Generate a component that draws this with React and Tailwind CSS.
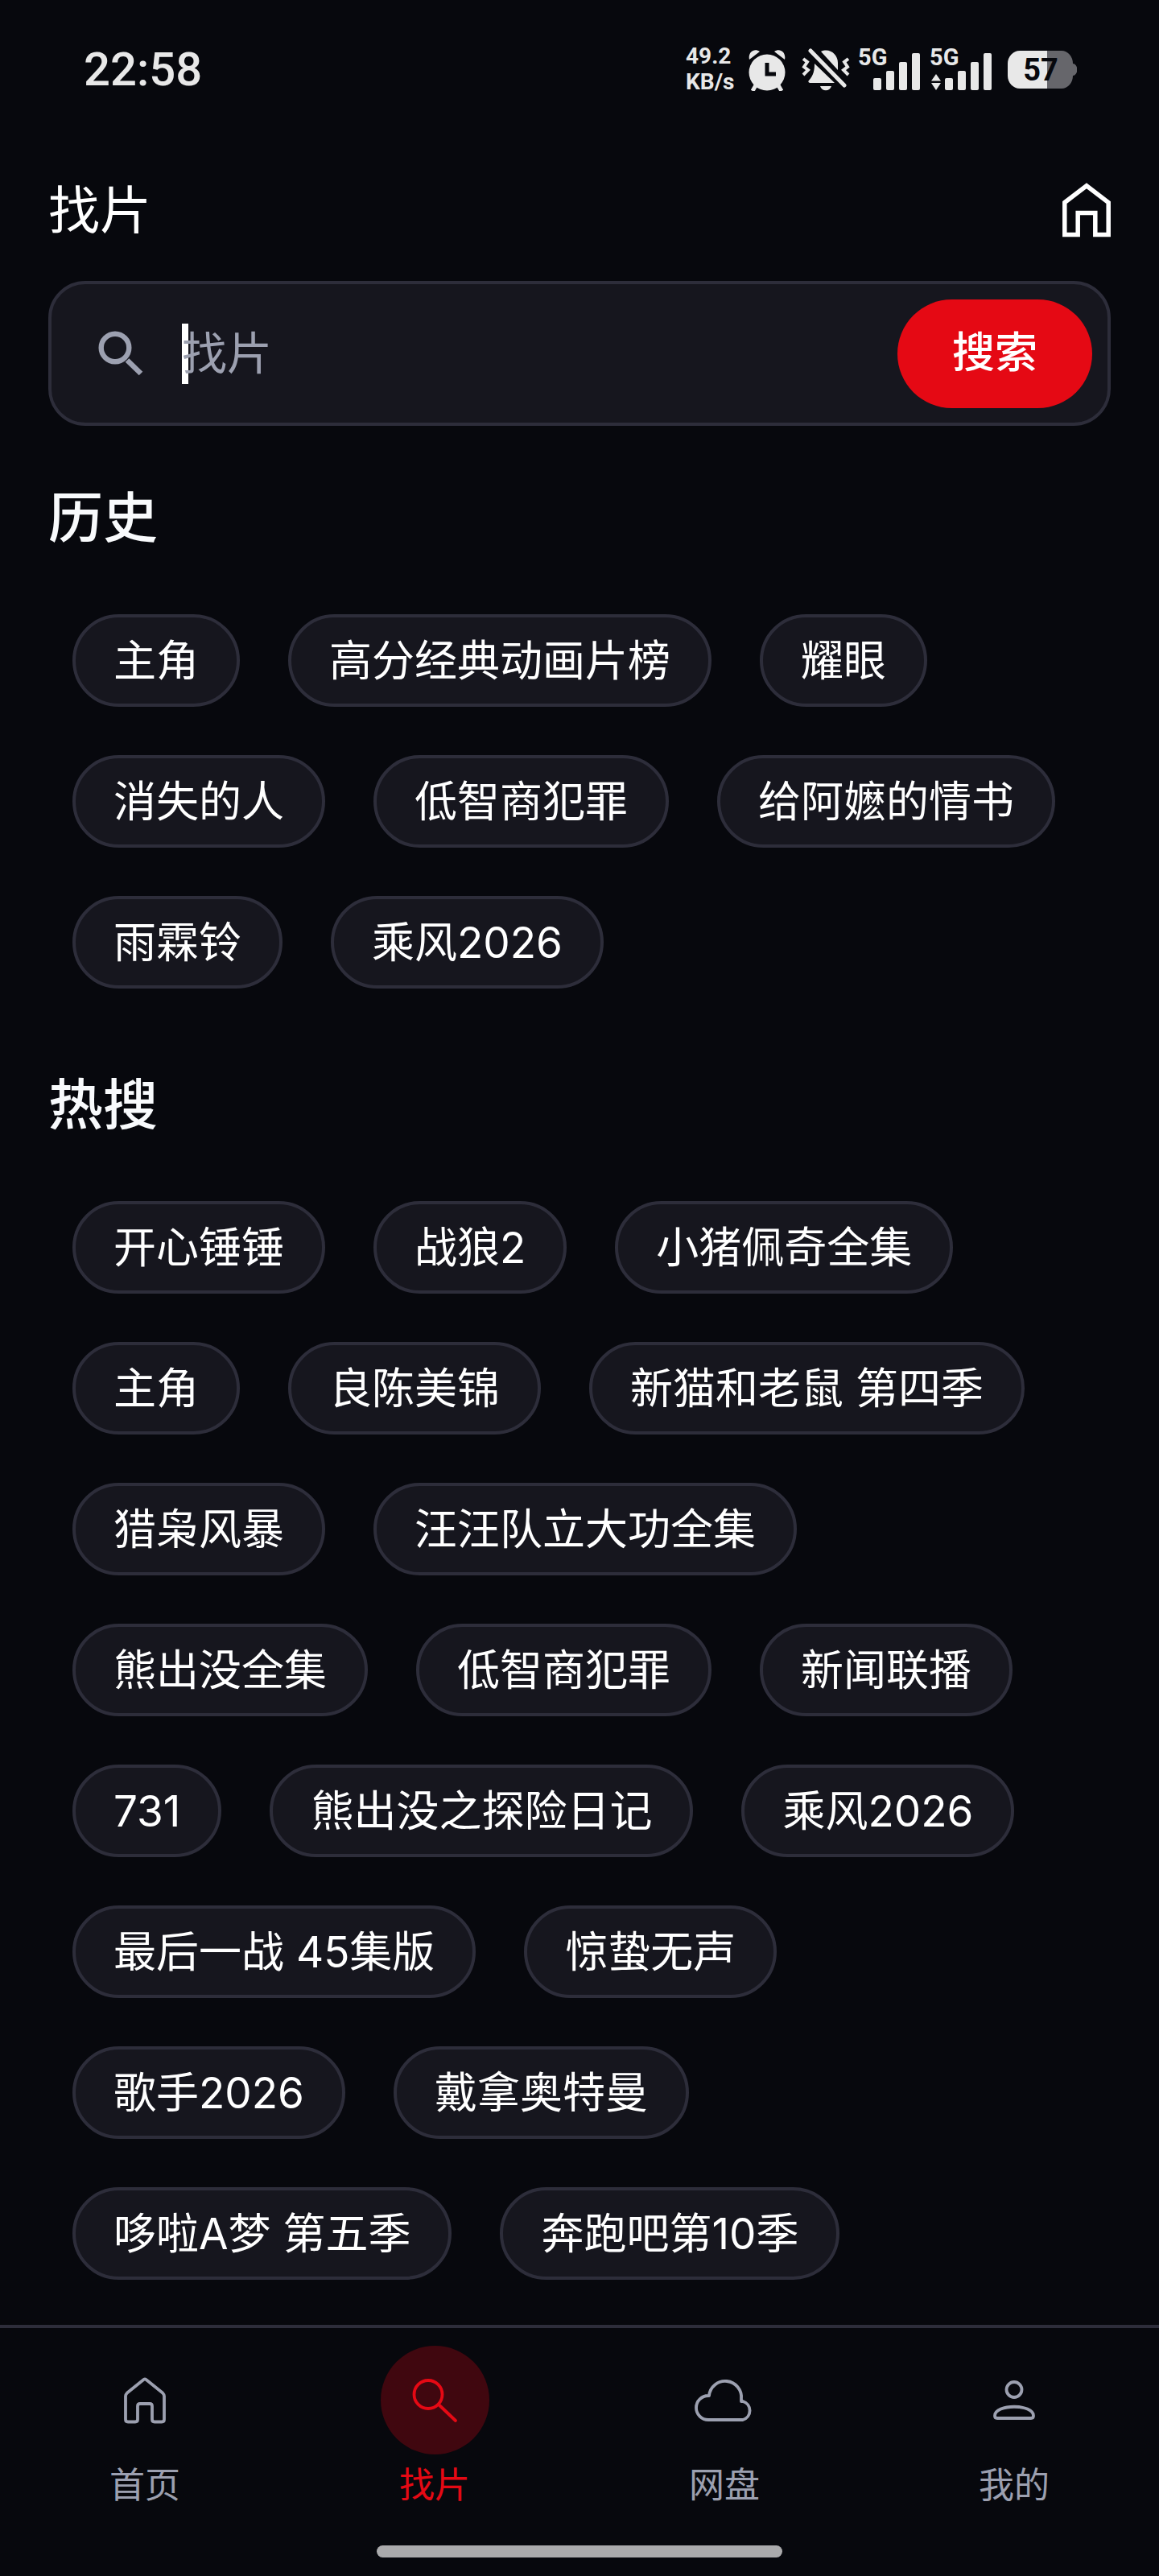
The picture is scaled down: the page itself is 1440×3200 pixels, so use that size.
const historyItems = [
  "主角",
  "高分经典动画片榜",
  "耀眼",
  "消失的人",
  "低智商犯罪",
  "给阿嬷的情书",
  "雨霖铃",
  "乘风2026",
];

const hotItems = [
  "开心锤锤",
  "战狼2",
  "小猪佩奇全集",
  "主角",
  "良陈美锦",
  "新猫和老鼠 第四季",
  "猎枭风暴",
  "汪汪队立大功全集",
  "熊出没全集",
  "低智商犯罪",
  "新闻联播",
  "731",
  "熊出没之探险日记",
  "乘风2026",
  "最后一战 45集版",
  "惊蛰无声",
  "歌手2026",
  "戴拿奥特曼",
  "哆啦A梦 第五季",
  "奔跑吧第10季",
];

const HomeIcon = () => (
  <svg viewBox="0 0 60 68" className="w-[60px] h-[68px]" fill="none" stroke="currentColor" strokeWidth="5.5">
    <path d="M2.8 24.5 30 3.8l27.2 20.7v40H40.8V37.5H19.2v27H2.8z" />
  </svg>
);

const SearchIcon = () => (
  <svg viewBox="0 0 56 56" className="w-14 h-14 shrink-0" fill="none" stroke="currentColor">
    <circle cx="21" cy="21" r="17.3" strokeWidth="6.4" />
    <path d="M36 36.5 53 53" strokeWidth="6.6" />
  </svg>
);

const Signal = ({ data }) => (
  <div className="relative w-[77px] h-[54px]">
    <span className="absolute left-0 top-0 text-[29px] leading-6 font-bold">5G</span>
    <svg viewBox="0 0 77 54" className="w-full h-full" fill="currentColor">
      <rect x="19" y="38" width="10" height="15" rx="2" />
      <rect x="35" y="29" width="10" height="24" rx="2" />
      <rect x="51" y="18" width="10" height="35" rx="2" />
      <rect x="67" y="7" width="10" height="46" rx="2" />
      {data && <path d="M8 33 14 41.5H2zM2 44h12L8 53z" />}
    </svg>
  </div>
);

const StatusBar = () => (
  <div className="flex items-center justify-between h-[172px] pl-[104px] pr-[102px] text-[#e8e8e8] font-['Roboto',sans-serif]">
    <time className="text-[58px] leading-none font-medium">22:58</time>
    <div className="flex items-center h-14">
      <div className="w-[62px] text-[28px] leading-8 font-bold">
        <div>49.2</div>
        <div>KB/s</div>
      </div>
      <svg viewBox="0 0 46 54" className="ml-4 w-[46px] h-[54px]" fill="currentColor">
        <path d="M1 15C-1 6 7 0 14 5zM45 15C47 6 39 0 32 5z" />
        <path d="m9 47-4 7M37 47l4 7" stroke="currentColor" strokeWidth="5" />
        <circle cx="23" cy="31" r="22.500" />
        <path d="M23 19v14h11" fill="none" stroke="#07080d" strokeWidth="5" />
      </svg>
      <svg viewBox="0 0 60 54" className="ml-5 w-[60px] h-[54px]" fill="currentColor">
        <path d="M24 5C34 0 45 8 45 19v9zM16 20 41 44H10c-2-1-2-2-1-3 6-7 7-13 7-21zM23 48h14c-2 7-12 7-14 0z" />
        <path d="m11 4 42 43" stroke="currentColor" strokeWidth="5" strokeLinecap="round" />
        <path d="m2 14 5 4-4 6 5 4-6 6M58 14l-5 4 4 6-5 4 6 6" fill="none" stroke="currentColor" strokeWidth="4" />
      </svg>
      <div className="ml-[10px] flex gap-3">
        <Signal />
        <Signal data />
      </div>
      <div className="relative ml-5 w-[86px] h-[47px]">
        <svg viewBox="0 0 86 47" className="w-full h-full">
          <path d="M49 0h18a14 16 0 0 1 14 16 5 7 0 0 1 0 15 14 16 0 0 1-14 16H49z" fill="#66666b" />
          <path d="M49 0H15A15 16 0 0 0 0 16v15a15 16 0 0 0 15 16h34z" fill="#e8e8e8" />
        </svg>
        <span className="absolute inset-0 pr-1 text-center text-[38px] leading-[48px] font-bold text-[#07080d]">57</span>
      </div>
    </div>
  </div>
);

const TagSection = ({ title, items }) => (
  <section>
    <h2 className="px-[60px] text-[68px] leading-[88px] font-medium text-[#f8fafc]">{title}</h2>
    <div className="mt-[76px] flex flex-wrap gap-[60px] px-[90px]">
      {items.map((item) => (
        <button
          key={item}
          className="h-[115px] px-[47px] rounded-full border-4 border-[#2d2d3a] bg-[#16161e] text-[53px] leading-[72px] text-white whitespace-nowrap"
        >
          {item}
        </button>
      ))}
    </div>
  </section>
);

const navItems = [
  {
    label: "首页",
    icon: <path d="M34.500 10 14 26.500c-1 1-2 2-2 4V59.500q0 3 3 3h9q3 0 3-3V43q0-3 3-3h12q3 0 3 3v16.500q0 3 3 3h9q3 0 3-3V30.500c0-2-1-3-2-4L37.500 10q-1.500-1-3 0z" />,
  },
  {
    label: "找片",
    active: true,
    icon: (
      <>
        <circle cx="28" cy="28.500" r="17.500" />
        <path d="m41 41 21 20" />
      </>
    ),
  },
  {
    label: "网盘",
    icon: <path d="M16 60a15 15 0 0 1 0-30h1a20 20 0 0 1 40 4v3h2a12 12 0 0 1 0 23z" />,
  },
  {
    label: "我的",
    icon: (
      <>
        <circle cx="36" cy="22.500" r="9.500" />
        <path d="M12 55c0-15 48-15 48 0q0 3-3 3H15q-3 0-3-3z" />
      </>
    ),
  },
];

const BottomNav = () => (
  <nav className="mt-auto border-t-4 border-[#2d2d3a] pt-[22px] pb-[23px]">
    <div className="grid grid-cols-4">
      {navItems.map((item) => (
        <a
          key={item.label}
          href="#"
          className={`flex flex-col items-center ${item.active ? "text-[#e50914]" : "text-[#9ca0b0]"}`}
        >
          <span
            className={`flex items-center justify-center w-[135px] h-[135px] rounded-full ${item.active ? "bg-[#40070f]" : ""}`}
          >
            <svg
              viewBox="0 0 72 72"
              className="w-[72px] h-[72px] overflow-visible"
              fill="none"
              stroke="currentColor"
              strokeWidth="3.8"
              strokeLinecap="round"
              strokeLinejoin="round"
            >
              {item.icon}
            </svg>
          </span>
          <span className="mt-2 text-[44px] leading-[60px]">{item.label}</span>
        </a>
      ))}
    </div>
    <div className="mx-auto mt-[45px] h-[15px] w-[504px] rounded-full bg-[#aaaaac]" />
  </nav>
);

const App = () => {
  return (
    <div className="flex flex-col min-h-screen bg-[#07080d] text-white font-['Inter','Noto_Sans_CJK_SC',sans-serif]">
      <StatusBar />
      <header className="flex items-center justify-between h-[177px] px-[60px]">
        <h1 className="text-[64px] leading-[84px]">找片</h1>
        <button aria-label="首页">
          <HomeIcon />
        </button>
      </header>
      <form
        className="mx-[60px] flex items-center h-[180px] rounded-[46px] border-4 border-[#2d2d3a] bg-[#16161e] pl-[58px] pr-[19px]"
        onSubmit={(e) => e.preventDefault()}
      >
        <label htmlFor="keyword" aria-label="找片" className="text-[#9ca0b0]">
          <SearchIcon />
        </label>
        <div className="relative ml-12 flex-1 flex items-center">
          <span className="absolute left-0 w-2 h-[75px] bg-white" />
          <input
            id="keyword"
            type="text"
            placeholder="找片"
            className="relative w-full bg-transparent text-[56px] leading-[76px] outline-none placeholder:text-[#9ca0b0]"
          />
        </div>
        <button className="w-[242px] h-[135px] rounded-full bg-[#e50914] text-[53px] font-medium text-white">搜索</button>
      </form>
      <main className="pt-[70px] flex flex-col gap-[100px]">
        <TagSection title="历史" items={historyItems} />
        <TagSection title="热搜" items={hotItems} />
      </main>
      <BottomNav />
    </div>
  );
};

export default App;
